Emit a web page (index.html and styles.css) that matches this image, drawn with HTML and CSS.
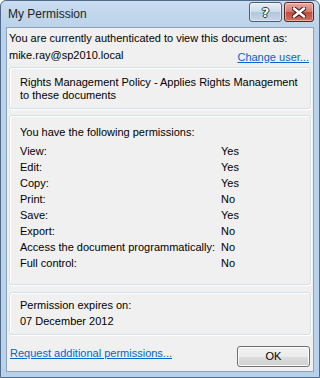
FILE: index.html
```html
<!DOCTYPE html>
<html>
    <head>
        <title>My Permission</title>
        <link rel="stylesheet" href="styles.css">
    </head>
    <body>
        <div class="window">
            <div class="titleBar">
                <div class="titleText">My Permission</div>
                <div class="captionButtons">
                    <div class="capButton helpButton">?</div>
                    <div class="capButton closeButton">
                        <svg width="14" height="11" viewBox="0 0 14 11">
                            <path d="M2 1.5 L12 9.5 M12 1.5 L2 9.5" stroke="#3a1a1a" stroke-width="4.6" stroke-linecap="round"/>
                            <path d="M2 1.5 L12 9.5 M12 1.5 L2 9.5" stroke="#ffffff" stroke-width="2.6" stroke-linecap="round"/>
                        </svg>
                    </div>
                </div>
            </div>

            <div class="client">
                <div class="authLine">You are currently authenticated to view this document as:</div>
                <div class="userRow">
                    <div class="userName">mike.ray@sp2010.local</div>
                    <a class="link changeUser" href="#">Change user...</a>
                </div>

                <div class="groupBox policyBox">
                    Rights Management Policy - Applies Rights Management<br>
                    to these documents
                </div>

                <div class="groupBox permBox">
                    <div class="permHeader">You have the following permissions:</div>
                    <div class="permGrid">
                        <div>View:</div><div>Yes</div>
                        <div>Edit:</div><div>Yes</div>
                        <div>Copy:</div><div>Yes</div>
                        <div>Print:</div><div>No</div>
                        <div>Save:</div><div>Yes</div>
                        <div>Export:</div><div>No</div>
                        <div>Access the document programmatically:</div><div>No</div>
                        <div>Full control:</div><div>No</div>
                    </div>
                </div>

                <div class="groupBox expireBox">
                    <div>Permission expires on:</div>
                    <div>07 December 2012</div>
                </div>

                <div class="footer">
                    <a class="link requestLink" href="#">Request additional permissions...</a>
                    <div class="okButton">OK</div>
                </div>
            </div>
        </div>
    </body>
</html>
```

FILE: styles.css
```css
body {
    margin: 0px;
    font-family: "Liberation Sans", Arial, sans-serif;
    font-size: 11px;
    color: #000000;
    background-color: #ffffff;
    overflow: hidden;
    white-space: nowrap;
}
.window {
    width: 320px;
    height: 378px;
    box-sizing: border-box;
    border: 1px solid #4f6a8a;
    border-radius: 6px 6px 0 0;
    background: linear-gradient(#c9dcf0, #b9d1ea 30px, #b9d1ea);
    padding: 0 5px 5px 5px;
    display: flex;
    flex-direction: column;
}
.titleBar {
    height: 26px;
    display: flex;
    justify-content: space-between;
}
.titleText {
    padding-left: 2px;
    padding-top: 6px;
    font-size: 12px;
    color: #1e1e1e;
}
.captionButtons {
    display: flex;
    gap: 2px;
    margin-top: 1px;
    height: 20px;
}
.capButton {
    box-sizing: border-box;
    height: 20px;
    border: 1px solid #4c5e74;
    border-radius: 3px;
    display: flex;
    align-items: center;
    justify-content: center;
    box-shadow: inset 0 0 0 1px rgba(255, 255, 255, 0.45);
}
.helpButton {
    width: 33px;
    background: linear-gradient(#e6eef7, #ccdaea 50%, #b4c6dc 51%, #c6d6e8);
    font-family: "DejaVu Sans", sans-serif;
    font-weight: bold;
    font-size: 13px;
    color: #ffffff;
    text-shadow: 0 0 1px #2e3c4e, 1px 0 0 #2e3c4e, -1px 0 0 #2e3c4e, 0 1px 0 #2e3c4e, 0 -1px 0 #2e3c4e;
}
.closeButton {
    width: 30px;
    border-color: #5a2220;
    background: linear-gradient(#e9a99e, #d47a6c 50%, #c24a3a 51%, #d0705e);
}
.client {
    flex: 1;
    background-color: #f0f0f0;
    border: 1px solid #8ca3bf;
    display: flex;
    flex-direction: column;
}
.authLine {
    padding: 2px 0 0 2px;
    line-height: 16px;
}
.userRow {
    display: flex;
    justify-content: space-between;
    margin-top: 1px;
    padding-left: 2px;
    line-height: 16px;
}
.link {
    color: #0066cc;
    text-decoration: underline;
}
.changeUser {
    margin-top: 2px;
    margin-right: 4px;
}
.groupBox {
    margin: 0 2px;
    border: 1px solid #d5dfe5;
    border-radius: 3px;
    box-shadow: inset 1px 1px 0 #ffffff, 1px 1px 0 #ffffff;
    padding-left: 10px;
}
.policyBox {
    margin-top: 2px;
    padding-top: 8px;
    padding-bottom: 6px;
    line-height: 13px;
}
.permBox {
    margin-top: 6px;
    padding-top: 8px;
    padding-bottom: 13px;
    line-height: 16px;
}
.permHeader {
    margin-bottom: 3px;
}
.permGrid {
    display: grid;
    grid-template-columns: 201px auto;
}
.expireBox {
    margin-top: 7px;
    padding-top: 4px;
    padding-bottom: 5px;
    line-height: 16px;
}
.footer {
    display: flex;
    justify-content: space-between;
    align-items: flex-start;
    margin-top: 11px;
    padding-left: 3px;
}
.requestLink {
    margin-top: -1px;
    line-height: 16px;
}
.okButton {
    box-sizing: border-box;
    width: 73px;
    height: 21px;
    margin-right: 3px;
    border: 1px solid #707070;
    border-radius: 3px;
    background: linear-gradient(#f2f2f2, #ebebeb 50%, #dddddd 51%, #cfcfcf);
    box-shadow: inset 0 0 0 1px #fcfcfc;
    text-align: center;
    line-height: 19px;
}
```
